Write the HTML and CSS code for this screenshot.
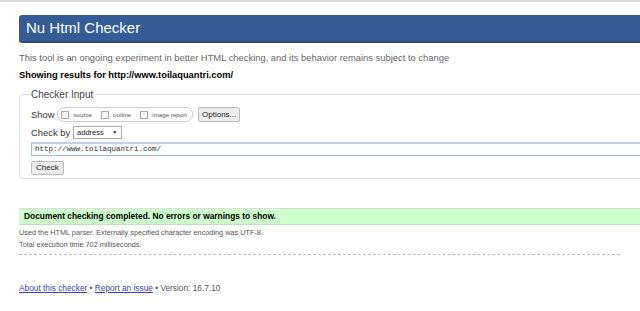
FILE: index.html
```html
<!DOCTYPE html>
<html lang="en">
<head>
    <meta charset="UTF-8">
    <title>Nu Html Checker</title>
    <link rel="stylesheet" href="styles.css">
</head>
<body>
    <div class="page">
        <h1>Nu Html Checker</h1>
        <p class="intro">This tool is an ongoing experiment in better HTML checking, and its behavior remains subject to change</p>
        <p class="showing">Showing results for http://www.toilaquantri.com/</p>

        <fieldset class="checker">
            <legend>Checker Input</legend>
            <div class="row">
                <span class="label">Show</span>
                <span class="show-group">
                    <label><span class="box"></span>source</label>
                    <label><span class="box"></span>outline</label>
                    <label><span class="box"></span>image report</label>
                </span>
                <button class="btn">Options...</button>
            </div>
            <div class="row">
                <span class="label">Check by</span>
                <span class="select">address <span class="arrow">&#9660;</span></span>
            </div>
            <div class="url">http://www.toilaquantri.com/</div>
            <button class="btn check">Check</button>
        </fieldset>

        <div class="result">Document checking completed. No errors or warnings to show.</div>
        <div class="details">
            <p>Used the HTML parser. Externally specified character encoding was UTF-8.</p>
            <p>Total execution time 702 milliseconds.</p>
        </div>

        <p class="footer"><a href="#">About this checker</a> &bull; <a href="#">Report an issue</a> &bull; Version: 16.7.10</p>
    </div>
</body>
</html>
```

FILE: styles.css
```css
html {
    overflow: hidden;
}
body {
    margin: 0;
    border-top: 2px solid #dcdcdc;
    font-family: "Liberation Sans", Arial, sans-serif;
    background: #fff;
    color: #000;
}
.page {
    width: 720px;
    padding: 13px 0 0 19px;
}
h1 {
    margin: 0;
    height: 26px;
    padding-left: 7px;
    line-height: 26px;
    font-size: 15px;
    font-weight: normal;
    color: #fff;
    background: #365c95;
    border-bottom: 2px solid #2c4c80;
    border-radius: 3px 0 0 3px;
}
.intro {
    margin: 9px 0 0;
    font-size: 9.4px;
    color: #666;
    line-height: 12px;
}
.showing {
    margin: 5px 0 0;
    font-size: 9.3px;
    font-weight: bold;
    line-height: 12px;
}
.checker {
    margin: 8px 0 0;
    padding: 6px 0 6px 11px;
    border: 1px solid #ddd;
    border-radius: 4px 0 0 4px;
    height: 76px;
}
.checker legend {
    padding: 0 1px;
    font-size: 10px;
    color: #444;
    margin-left: -1px;
}
.row {
    display: flex;
    align-items: center;
    height: 17px;
    margin-bottom: 1px;
}
.label {
    font-size: 9.4px;
    color: #333;
    margin-right: 3px;
}
.show-group {
    display: flex;
    align-items: center;
    height: 13px;
    border: 1px solid #ccc;
    border-radius: 7px;
    padding: 0 5px 0 3px;
    gap: 9px;
}
.show-group label {
    display: flex;
    align-items: center;
    font-size: 6.2px;
    color: #555;
}
.box {
    width: 6px;
    height: 6px;
    border: 1px solid #aaa;
    margin-right: 4px;
    background: #f6f6f6;
}
.btn {
    font-family: "Liberation Sans", Arial, sans-serif;
    font-size: 8px;
    color: #222;
    background: #ececec;
    border: 1px solid #bbb;
    border-radius: 2px;
    padding: 1px 3px;
    height: 15px;
    margin-left: 5px;
}
.select {
    font-size: 7.5px;
    color: #222;
    border: 1px solid #aaa;
    height: 11px;
    line-height: 11px;
    width: 44px;
    padding-left: 3px;
    position: relative;
}
.arrow {
    font-size: 5px;
    position: absolute;
    right: 4px;
    top: 0;
}
.url {
    margin-top: 1px;
    height: 11px;
    line-height: 11px;
    font-family: "Liberation Mono", "Courier New", monospace;
    font-size: 7.5px;
    color: #333;
    border: 1px solid #a3b8d6;
    border-top: 2px solid #c3d0e2;
    padding-left: 3px;
    background: #fdfefe;
}
.check {
    margin: 3px 0 0;
    height: 14px;
    padding: 0 4px;
}
.result {
    margin-top: 29px;
    height: 15px;
    line-height: 15px;
    padding-left: 5px;
    font-size: 8.4px;
    font-weight: bold;
    background: #ccffcc;
    border-top: 1px solid #ddd;
    border-bottom: 1px solid #c6dcc6;
}
.details {
    border-bottom: 1px dashed #bbb;
    width: 601px;
    padding: 2px 0 3px;
}
.details p {
    margin: 0;
    font-size: 7.3px;
    color: #555;
    line-height: 12px;
}
.footer {
    margin: 28px 0 0;
    font-size: 8.3px;
    color: #555;
}
.footer a {
    color: #3b3ec0;
}
```
